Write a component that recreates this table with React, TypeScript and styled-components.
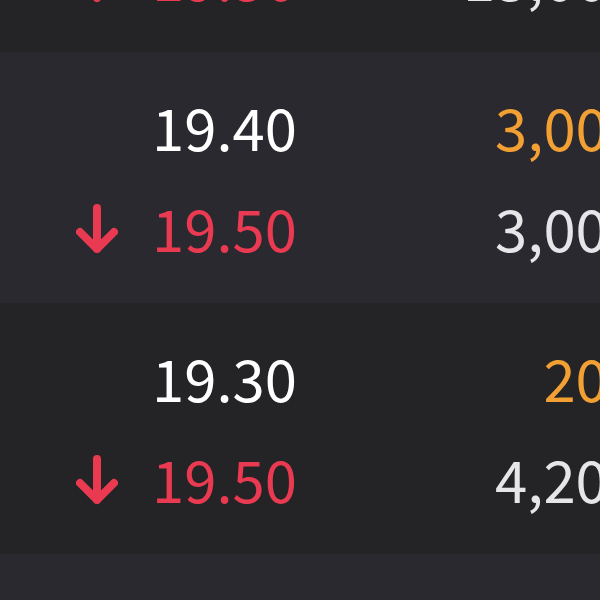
import React from "react";
import styled, { createGlobalStyle } from "styled-components";

const GlobalStyle = createGlobalStyle`
  html, body {
    margin: 0;
    padding: 0;
    background: #242427;
    overflow: hidden;
  }
  body {
    font-family: "Noto Sans CJK JP", "Noto Sans", sans-serif;
  }
`;

const List = styled.div`
  width: 680px;
  margin-top: -199px;
  display: flex;
  flex-direction: column;
`;

const Row = styled.div<{ $alt: boolean }>`
  height: 251px;
  box-sizing: border-box;
  padding: 24px 0 0 76px;
  background: ${(p) => (p.$alt ? "#2a2930" : "#242427")};
  display: flex;
  flex-direction: column;
`;

const Line = styled.div`
  display: grid;
  grid-template-columns: 42px 179px 343px;
  height: 101px;
  font-size: 58px;
  line-height: 101px;
  font-weight: 400;
`;

const ArrowCell = styled.div`
  display: flex;
  align-items: flex-start;
  padding-top: 27px;
  box-sizing: border-box;
`;

const Price = styled.div<{ $down: boolean }>`
  text-align: right;
  color: ${(p) => (p.$down ? "#ea3a51" : "#ffffff")};
`;

const Qty = styled.div<{ $hot: boolean }>`
  text-align: right;
  color: ${(p) => (p.$hot ? "#f2a033" : "#e6e6e9")};
`;

const DownArrow = () => (
  <svg width="42" height="50" viewBox="0 0 42 50" fill="none">
    <path
      d="M21 4 V45 M4 28 L21 45 L38 28"
      stroke="#ea3a51"
      strokeWidth="8"
      strokeLinecap="round"
      strokeLinejoin="round"
    />
  </svg>
);

type Entry = { top: string; topQty: string; bottom: string; bottomQty: string };

const rows: Entry[] = [
  { top: "19.60", topQty: "1,000", bottom: "19.50", bottomQty: "13,000" },
  { top: "19.40", topQty: "3,000", bottom: "19.50", bottomQty: "3,000" },
  { top: "19.30", topQty: "200", bottom: "19.50", bottomQty: "4,200" },
  { top: "19.20", topQty: "1,500", bottom: "19.50", bottomQty: "4,400" },
];

export default function App() {
  return (
    <>
      <GlobalStyle />
      <List>
        {rows.map((r, i) => (
          <Row key={i} $alt={i % 2 === 1}>
            <Line>
              <ArrowCell />
              <Price $down={false}>{r.top}</Price>
              <Qty $hot>{r.topQty}</Qty>
            </Line>
            <Line>
              <ArrowCell>
                <DownArrow />
              </ArrowCell>
              <Price $down>{r.bottom}</Price>
              <Qty $hot={false}>{r.bottomQty}</Qty>
            </Line>
          </Row>
        ))}
      </List>
    </>
  );
}
